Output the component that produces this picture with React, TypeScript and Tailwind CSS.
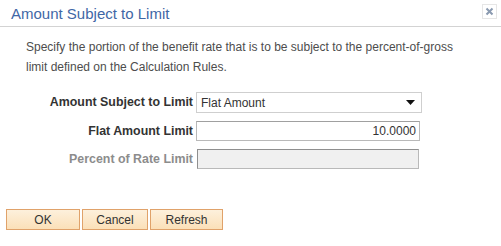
export default function App() {
  return (
    <div className="w-[501px] h-[246px] bg-white font-['Liberation_Sans',Arial,sans-serif] text-[12px] text-[#333333] overflow-hidden">
      {/* header */}
      <div className="h-[27px] flex items-center justify-between border-b border-[#d3d3d3] pl-[11px] pr-[4px]">
        <span className="text-[15px] text-[#3f67a6] leading-none">Amount Subject to Limit</span>
        <button
          type="button"
          className="w-[15px] h-[15px] border border-[#e6e6e6] flex items-center justify-center mb-[3px]"
        >
          <svg width="9" height="9" viewBox="0 0 9 9">
            <path d="M1.5 1.5 L7.5 7.5 M7.5 1.5 L1.5 7.5" stroke="#8a9ab0" strokeWidth="2" />
          </svg>
        </button>
      </div>

      <div className="pl-[26px] pt-[10px] pr-[30px] leading-[20px] text-[#4d4d4d]">
        Specify the portion of the benefit rate that is to be subject to the percent-of-gross limit defined on the
        Calculation Rules.
      </div>

      <div className="mt-[15px] flex flex-col gap-[8px]">
        <div className="flex items-center">
          <label className="w-[196px] text-right font-bold text-[12.4px] text-[#333333] pr-[3px]">Amount Subject to Limit</label>
          <div className="w-[226px] h-[21px] border border-[#cfcfcf] flex items-center justify-between pl-[4px] pr-[6px]">
            <span className="text-[#333333]">Flat Amount</span>
            <svg width="9" height="5" viewBox="0 0 9 5">
              <path d="M0 0 L9 0 L4.5 5 Z" fill="#111" />
            </svg>
          </div>
        </div>
        <div className="flex items-center">
          <label className="w-[196px] text-right font-bold text-[12.4px] text-[#333333] pr-[3px]">Flat Amount Limit</label>
          <div className="w-[224px] h-[20px] border border-[#b9b9b9] border-t-[#a0a0a0] flex items-center justify-end pr-[3px]">
            <span className="text-[#333333]">10.0000</span>
          </div>
        </div>
        <div className="flex items-center">
          <label className="w-[197px] text-right font-bold text-[12.4px] text-[#8c8c8c] pr-[4px]">Percent of Rate Limit</label>
          <div className="w-[222px] h-[20px] border border-[#b9b9b9] border-t-[#8f8f8f] border-l-[#8f8f8f] bg-[#f0f0f0]"></div>
        </div>
      </div>

      <div className="mt-[40px] pl-[6px] flex gap-[2px]">
        <button
          type="button"
          className="w-[74px] h-[21px] border border-[#e0a26a] bg-gradient-to-b from-[#fdf0dc] to-[#fbe0b8] text-[#333333] leading-none"
        >
          OK
        </button>
        <button
          type="button"
          className="w-[66px] h-[21px] border border-[#e0a26a] bg-gradient-to-b from-[#fdf0dc] to-[#fbe0b8] text-[#333333] leading-none"
        >
          Cancel
        </button>
        <button
          type="button"
          className="w-[73px] h-[21px] border border-[#e0a26a] bg-gradient-to-b from-[#fdf0dc] to-[#fbe0b8] text-[#333333] leading-none"
        >
          Refresh
        </button>
      </div>
    </div>
  );
}
